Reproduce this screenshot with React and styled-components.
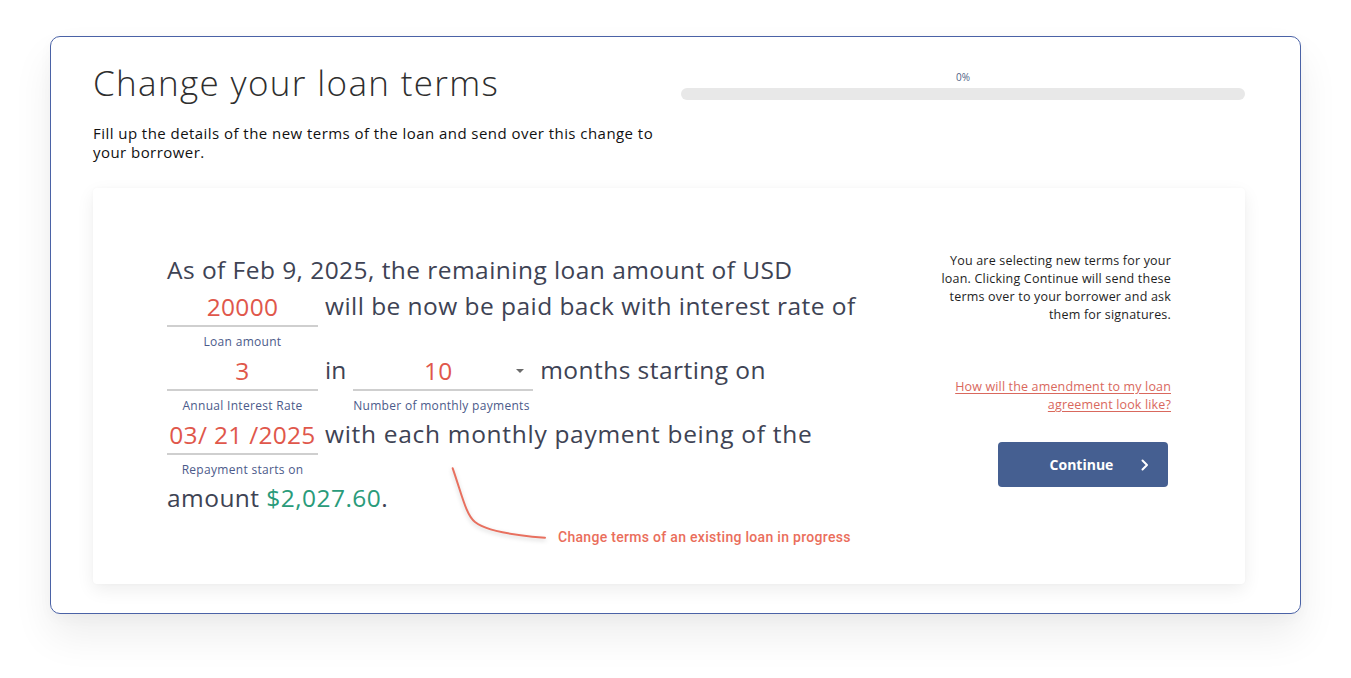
import React from "react";
import styled, { createGlobalStyle } from "styled-components";

const GlobalStyle = createGlobalStyle`
  html, body { margin: 0; padding: 0; background: #ffffff; }
  body { font-family: "Open Sans", "Noto Sans", sans-serif; }
  * { box-sizing: border-box; }
`;

const Page = styled.div`
  width: 1351px;
  height: 678px;
  padding: 36px 50px 0 50px;
  background: #fff;
`;

const Frame = styled.section`
  border: 1px solid #4a62a6;
  border-radius: 10px;
  background: #fff;
  box-shadow: 0 22px 40px rgba(0, 0, 0, 0.07), 0 4px 14px rgba(0, 0, 0, 0.03);
  padding: 0 55px 29px 42px;
`;

const Header = styled.header`
  display: flex;
  justify-content: space-between;
  align-items: flex-start;
  height: 151px;
`;

const TitleBlock = styled.div`
  width: 580px;
  padding-top: 24px;
`;

const Title = styled.h1`
  margin: 0;
  font-family: "Open Sans", sans-serif;
  font-weight: 300;
  font-size: 35px;
  line-height: 44px;
  color: #2e2e2e;
  letter-spacing: 1.35px;
  white-space: nowrap;
`;

const Subtitle = styled.p`
  margin: 19px 0 0;
  font-size: 15px;
  line-height: 19px;
  letter-spacing: 0.45px;
  color: #111;
  width: 580px;
`;

const Progress = styled.div`
  width: 564px;
  padding-top: 33px;
  display: flex;
  flex-direction: column;
  align-items: center;
`;

const ProgressLabel = styled.span`
  font-size: 10px;
  line-height: 14px;
  color: #4f5f86;
`;

const ProgressTrack = styled.div`
  margin-top: 4px;
  width: 100%;
  height: 12px;
  border-radius: 6px;
  background: #e8e8e8;
`;

const Card = styled.div`
  position: relative;
  height: 396px;
  background: #fff;
  border-radius: 4px;
  box-shadow: 0 6px 18px rgba(0, 0, 0, 0.07), 0 0 3px rgba(0, 0, 0, 0.03);
  display: flex;
  justify-content: space-between;
  padding: 64px 74px 0 74px;
`;

const Sentence = styled.div`
  display: flex;
  flex-direction: column;
  font-size: 24.5px;
  letter-spacing: 0.45px;
  color: #3e4354;
`;

const Row = styled.div`
  display: flex;
  align-items: flex-start;
  gap: ${(p) => p.$gap || 7}px;
`;

const Words = styled.span`
  line-height: 36px;
  white-space: nowrap;
  letter-spacing: ${(p) => p.$ls || "inherit"};
`;

const Field = styled.div`
  display: flex;
  flex-direction: column;
  width: ${(p) => p.$w || 151}px;
`;

const Value = styled.div`
  position: relative;
  height: 39px;
  line-height: 37px;
  text-align: center;
  color: #e0574b;
  white-space: nowrap;
  letter-spacing: 0.3px;
  padding-right: ${(p) => (p.$select ? 10 : 0)}px;
  border-bottom: 2px solid #cfcfcf;
`;

const Caret = styled.span`
  position: absolute;
  right: 9px;
  top: 17px;
  width: 0;
  height: 0;
  border-left: 4px solid transparent;
  border-right: 4px solid transparent;
  border-top: 4px solid #6b6b6b;
`;

const Label = styled.div`
  margin-top: 7px;
  height: 18px;
  font-size: 12px;
  line-height: 16px;
  letter-spacing: 0.3px;
  color: #4b5a8a;
  text-align: ${(p) => (p.$left ? "left" : "center")};
  white-space: nowrap;
`;

const Amount = styled.span`
  color: #2a9b7a;
`;

const Side = styled.aside`
  width: 234px;
  display: flex;
  flex-direction: column;
  align-items: flex-end;
  text-align: right;
`;

const SideText = styled.p`
  margin: 0;
  font-size: 12.5px;
  line-height: 18px;
  letter-spacing: 0.2px;
  color: #1e1e1e;
`;

const HelpLink = styled.a`
  margin-top: 54px;
  font-size: 12.5px;
  line-height: 18px;
  letter-spacing: 0.15px;
  color: #d9685d;
  text-decoration: underline;
  text-underline-offset: 2px;
`;

const ContinueButton = styled.button`
  margin-top: 28px;
  margin-right: 3px;
  width: 170px;
  height: 45px;
  border: none;
  border-radius: 4px;
  background: #455f91;
  color: #fff;
  font-family: "Open Sans", sans-serif;
  font-weight: 700;
  font-size: 14px;
  display: flex;
  align-items: center;
  justify-content: center;
  gap: 27px;
  padding-left: 40px;
  cursor: pointer;
`;

const Callout = styled.div`
  position: absolute;
  left: 355px;
  top: 276px;
  display: flex;
  align-items: flex-end;
  pointer-events: none;
`;

const CalloutText = styled.span`
  margin-left: 10px;
  margin-bottom: -3px;
  font-family: "Roboto", sans-serif;
  font-weight: 500;
  font-size: 14px;
  letter-spacing: 0.3px;
  color: #ea6e5b;
  white-space: nowrap;
`;

export default function App() {
  return (
    <>
      <GlobalStyle />
      <Page>
        <Frame>
          <Header>
            <TitleBlock>
              <Title>Change your loan terms</Title>
              <Subtitle>
                Fill up the details of the new terms of the loan and send over this change to your borrower.
              </Subtitle>
            </TitleBlock>
            <Progress>
              <ProgressLabel>0%</ProgressLabel>
              <ProgressTrack />
            </Progress>
          </Header>
          <Card>
            <Sentence>
              <Row>
                <Words>As of Feb 9, 2025, the remaining loan amount of USD</Words>
              </Row>
              <Row>
                <Field>
                  <Value>20000</Value>
                  <Label>Loan amount</Label>
                </Field>
                <Words>will be now be paid back with interest rate of</Words>
              </Row>
              <Row>
                <Field>
                  <Value>3</Value>
                  <Label>Annual Interest Rate</Label>
                </Field>
                <Words $ls="0px">in</Words>
                <Field $w={180}>
                  <Value $select>
                    10
                    <Caret />
                  </Value>
                  <Label $left>Number of monthly payments</Label>
                </Field>
                <Words>months starting on</Words>
              </Row>
              <Row>
                <Field>
                  <Value>03/ 21 /2025</Value>
                  <Label>Repayment starts on</Label>
                </Field>
                <Words $ls="0.7px">with each monthly payment being of the</Words>
              </Row>
              <Row>
                <Words>
                  amount <Amount>$2,027.60</Amount>.
                </Words>
              </Row>
            </Sentence>
            <Side>
              <SideText>
                You are selecting new terms for your loan. Clicking Continue will send these terms over to your
                borrower and ask them for signatures.
              </SideText>
              <HelpLink href="#">
                How will the amendment to my loan
                <br />
                agreement look like?
              </HelpLink>
              <ContinueButton type="button">
                <span>Continue</span>
                <svg width="10" height="12" viewBox="0 0 10 12" fill="none">
                  <path d="M2.5 1.5L7 6L2.5 10.5" stroke="#fff" strokeWidth="2" strokeLinecap="round" strokeLinejoin="round" />
                </svg>
              </ContinueButton>
            </Side>
            <Callout>
              <svg width="100" height="78" viewBox="0 0 100 78" fill="none" style={{ filter: "drop-shadow(0 2px 2px rgba(0,0,0,0.18))" }}>
                <path
                  d="M4.7 4.3 C 14 31, 18 51, 27 58 C 37 66, 62 71, 97 73.7"
                  stroke="#e8705f"
                  strokeWidth="2"
                  strokeLinecap="round"
                  fill="none"
                />
              </svg>
              <CalloutText>Change terms of an existing loan in progress</CalloutText>
            </Callout>
          </Card>
        </Frame>
      </Page>
    </>
  );
}
